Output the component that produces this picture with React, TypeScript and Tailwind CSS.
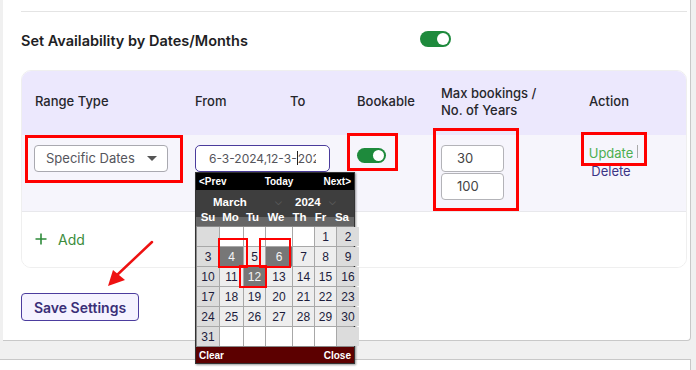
import React from "react"

const days = ["Su", "Mo", "Tu", "We", "Th", "Fr", "Sa"]

const weeks: (number | null)[][] = [
  [null, null, null, null, null, 1, 2],
  [3, 4, 5, 6, 7, 8, 9],
  [10, 11, 12, 13, 14, 15, 16],
  [17, 18, 19, 20, 21, 22, 23],
  [24, 25, 26, 27, 28, 29, 30],
  [31, null, null, null, null, null, null],
]

const picked = [4, 6, 12]

function Toggle({ big }: { big?: boolean }) {
  return (
    <div
      className={`flex items-center justify-end rounded-full bg-[#1e8a3c] ${
        big ? "w-[31px] h-[16px] pr-[2px]" : "w-[29px] h-[15px] pr-[2px]"
      }`}
    >
      <span className={`rounded-full bg-white ${big ? "w-[12px] h-[12px]" : "w-[11px] h-[11px]"}`} />
    </div>
  )
}

function Calendar() {
  return (
    <div className="absolute left-[195px] top-[172px] w-[160px] border border-[#333] bg-[#3e3e3e] font-['Liberation_Sans',Arial,sans-serif] font-bold text-white shadow-[1px_1px_2px_rgba(0,0,0,0.4)]">
      {/* nav bar */}
      <div className="flex h-[17px] items-center justify-between bg-black px-[3px] text-[10px]">
        <span>&lt;Prev</span>
        <span className="ml-[8px]">Today</span>
        <span>Next&gt;</span>
      </div>
      {/* month / year */}
      <div className="flex h-[19px] items-end bg-[#3e3e3e] text-[11.5px] leading-[13px]">
        <span className="ml-[17px] w-[62px]">March</span>
        <span className="text-[9px] text-[#5a5a5a]">⌵</span>
        <span className="ml-[13px] w-[34px]">2024</span>
        <span className="text-[9px] text-[#5a5a5a]">⌵</span>
      </div>
      <div className="grid h-[17px] grid-cols-[22px_23px_21px_26px_21px_21px_22px] items-center bg-[linear-gradient(#3e3e3e_45%,#666_45%)] px-[1px] text-[11.5px]">
        {days.map((d) => (
          <span key={d} className="text-center">
            {d}
          </span>
        ))}
      </div>
      {/* days */}
      <div className="grid grid-cols-[22px_23px_21px_26px_21px_21px_22px] gap-px border border-[#8a8a8a] bg-[#a8a8a8] text-[12px] font-normal">
        {weeks.flat().map((n, i) => {
          const col = i % 7
          const weekend = col === 0 || col === 6
          const sel = n !== null && picked.includes(n)
          const bg = sel
            ? "bg-[#777777] text-[#f4f4f4]"
            : n === null
            ? weekend
              ? "bg-[#dcdcdc]"
              : "bg-white"
            : weekend
            ? "bg-[#dcdcdc] text-[#1c1c3c]"
            : "bg-[#eeeeee] text-[#1c1c3c]"
          return (
            <div key={i} className={`flex h-[19px] items-center justify-center ${bg}`}>
              {n}
            </div>
          )
        })}
      </div>
      <div className="flex h-[16px] items-center justify-between bg-[#5c0000] px-[3px] text-[10px]">
        <span>Clear</span>
        <span>Close</span>
      </div>
    </div>
  )
}

export default function App() {
  return (
    <div className="relative h-[370px] w-[696px] overflow-hidden bg-[#f0f0f0] font-['Inter',sans-serif] text-[#222]">
      {/* settings panel */}
      <div className="ml-[3px] h-[341px] w-[688px] rounded-br-[4px] border-r border-b border-[#c8c8c8] bg-white pl-[18px] pr-[3px]">
        <div className="h-[12px] border-b border-[#e4e4e4]" />

        <div className="flex h-[58px] items-center">
          <h2 className="w-[399px] text-[14.5px] font-semibold text-[#1e1e24]">Set Availability by Dates/Months</h2>
          <div className="mb-[4px]">
            <Toggle big />
          </div>
        </div>

        {/* ranges table */}
        <div className="overflow-hidden rounded-[10px] border border-[#efefef]">
          <div className="grid h-[64px] grid-cols-[160px_95px_67px_84px_148px_1fr] items-center bg-[#ece8fd] pb-[3px] pl-[13px] text-[13px] font-medium text-[#26262c]">
            <span>Range Type</span>
            <span>From</span>
            <span>To</span>
            <span>Bookable</span>
            <span className="leading-[17px]">
              Max bookings /
              <br />
              No. of Years
            </span>
            <span>Action</span>
          </div>

          <div className="grid h-[77px] grid-cols-[160px_95px_67px_84px_148px_1fr] items-start border-b border-[#e8e8ec] bg-[#f6f5fc] pl-[13px] pt-[10px]">
            <div className="-ml-px flex h-[27px] w-[134px] items-center justify-between rounded-[4px] border border-[#a9a9b0] bg-white pl-[11px] pr-[10px] text-[13px] text-[#55555c]">
              <span>Specific Dates</span>
              <span className="h-0 w-0 border-x-[5px] border-t-[5px] border-x-transparent border-t-[#555]" />
            </div>
            <div className="col-span-2 flex h-[27px] w-[135px] items-center rounded-[5px] border-[1.5px] border-[#4b3c9c] bg-white pl-[13px] text-[12px] text-[#55555c]">
              <div className="flex w-[107px] overflow-hidden whitespace-nowrap">
                <span>6-3-2024,12-3-</span>
                <span className="mt-px h-[14px] border-l border-[#222]" />
                <span>2024</span>
              </div>
            </div>
            <div className="pt-[3px]">
              <Toggle />
            </div>
            <div className="flex flex-col gap-px">
              <div className="flex h-[27px] w-[63px] items-center rounded-[4px] border border-[#b3b3b8] bg-white pl-[15px] text-[13px] text-[#444]">
                30
              </div>
              <div className="flex h-[27px] w-[63px] items-center rounded-[4px] border border-[#b3b3b8] bg-white pl-[15px] text-[13px] text-[#444]">
                100
              </div>
            </div>
            <div className="-mt-px flex w-[44px] flex-col items-center text-[13px] leading-[18px]">
              <span className="relative text-[#4caf50]">
                Update
                <span className="absolute -right-[5px] top-[1px] h-[13px] border-l border-[#aaa]" />
              </span>
              <span className="text-[#3b3486]">Delete</span>
            </div>
          </div>

          <div className="flex h-[55px] items-center gap-[11px] bg-white pb-px pl-[13px] text-[14px] text-[#3c8d3c]">
            <svg width="12" height="12" viewBox="0 0 12 12" className="text-[#2e8b3a]">
              <path d="M6 0.5v11M0.5 6h11" stroke="currentColor" strokeWidth="1.6" />
            </svg>
            <span>Add</span>
          </div>
        </div>

        <button className="mt-[25px] h-[28px] w-[118px] rounded-[4px] border border-[#4c3d9e] bg-[#f5f3ff] text-[14px] font-semibold text-[#3a2f78]">
          Save Settings
        </button>
      </div>

      <div className="mt-[18px] h-[20px] w-[691px] border-t border-r border-[#c8c8c8] bg-white" />

      <Calendar />

      {/* annotations */}
      <div className="absolute left-[25px] top-[135px] h-[48px] w-[158px] border-[3px] border-[#ff0000]" />
      <div className="absolute left-[347px] top-[133px] h-[38px] w-[51px] border-[3px] border-[#ff0000]" />
      <div className="absolute left-[433px] top-[128px] h-[83px] w-[86px] border-[3px] border-[#ff0000]" />
      <div className="absolute left-[581px] top-[132px] h-[34px] w-[66px] border-[3px] border-[#ff0000]" />
      <div className="absolute left-[218px] top-[238px] h-[30px] w-[30px] border-[2px] border-[#ff0000]" />
      <div className="absolute left-[259px] top-[238px] h-[30px] w-[32px] border-[2px] border-[#ff0000]" />
      <div className="absolute left-[239px] top-[265px] h-[23px] w-[28px] border-[2px] border-[#ff0000]" />

      <svg className="absolute left-0 top-0" width="696" height="370" viewBox="0 0 696 370">
        <path d="M152 242 L116 276" stroke="#ee1111" strokeWidth="2.5" strokeLinecap="round" />
        <path d="M108 286 L113 270 L125 280 Z" fill="#ee1111" />
      </svg>
    </div>
  )
}
